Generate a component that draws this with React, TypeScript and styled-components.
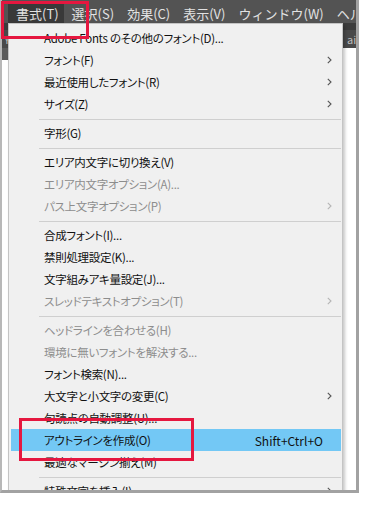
import styled, { createGlobalStyle } from "styled-components";

const GlobalStyle = createGlobalStyle`
  html, body {
    margin: 0;
    padding: 0;
    background: #ffffff;
  }
  body {
    font-family: "Noto Sans CJK JP", "Noto Sans", sans-serif;
  }
`;

const Page = styled.div`
  position: relative;
  width: 370px;
  height: 505px;
  overflow: hidden;
`;

const Frame = styled.div`
  position: relative;
  width: 354px;
  height: 490px;
  border-left: 2px solid #b8b8b8;
  border-right: 3px solid #a2a2a2;
  border-bottom: 3px solid #a2a2a2;
  overflow: hidden;
  display: flex;
  flex-direction: column;
  background: #ffffff;
`;

const MenuBar = styled.div`
  display: flex;
  align-items: flex-end;
  flex-shrink: 0;
  height: 23px;
  padding-left: 6px;
  background: #535353;
`;

const MenuTitle = styled.div<{ $open?: boolean }>`
  display: flex;
  align-items: center;
  height: 20px;
  padding: 0 5px 0 8px;
  font-size: 13px;
  color: #e2e2e2;
  white-space: nowrap;
  background: ${(p) => (p.$open ? "#393939" : "transparent")};
`;

const TabBar = styled.div`
  display: flex;
  align-items: flex-end;
  flex-shrink: 0;
  height: 25px;
  background: #3b3b3b;
`;

const DocTab = styled.div<{ $w: number }>`
  display: flex;
  align-items: center;
  flex-shrink: 0;
  width: ${(p) => p.$w}px;
  height: 18px;
  padding-left: 2px;
  font-size: 11px;
  color: #bdbdbd;
  white-space: nowrap;
  overflow: hidden;
  background: #494949;
`;

const RulerRow = styled.div`
  display: flex;
  flex-shrink: 0;
  height: 12px;
`;

const RulerCorner = styled.div`
  width: 6px;
  background: #5b5b5b;
`;

const Panel = styled.div`
  position: absolute;
  top: 23px;
  left: 6px;
  width: 335px;
  box-sizing: border-box;
  padding: 3px 1px 4px 2px;
  background: #f0f0f0;
  border: 1px solid #c4c4c4;
  box-shadow: 2px 2px 3px rgba(0, 0, 0, 0.22);
`;

const Item = styled.div<{ $disabled?: boolean; $active?: boolean }>`
  display: flex;
  align-items: center;
  height: 22px;
  padding-left: 33px;
  font-size: 11.5px;
  letter-spacing: -0.3px;
  font-feature-settings: "palt";
  white-space: nowrap;
  color: ${(p) => (p.$disabled ? "#8d8d8d" : "#111111")};
  background: ${(p) => (p.$active ? "#73c8f5" : "transparent")};
`;

const Shortcut = styled.span`
  margin-left: auto;
  padding-right: 18px;
  font-size: 12px;
  letter-spacing: 0;
  font-feature-settings: normal;
`;

const Arrow = styled.svg<{ $disabled?: boolean }>`
  margin-left: auto;
  margin-right: 9px;
  width: 5px;
  height: 8px;
  stroke: ${(p) => (p.$disabled ? "#b5b5b5" : "#555555")};
`;

const Separator = styled.div`
  height: 1px;
  margin: 4px 0 2px 28px;
  background: #cfcfcf;
`;

const Callout = styled.div<{ $x: number; $y: number; $w: number; $h: number }>`
  position: absolute;
  left: ${(p) => p.$x}px;
  top: ${(p) => p.$y}px;
  width: ${(p) => p.$w}px;
  height: ${(p) => p.$h}px;
  box-sizing: border-box;
  border: 3px solid #e5173f;
  pointer-events: none;
`;

type Entry =
  | { sep: true }
  | {
      sep?: false;
      label: string;
      disabled?: boolean;
      sub?: boolean;
      active?: boolean;
      shortcut?: string;
    };

const menus = ["書式(T)", "選択(S)", "効果(C)", "表示(V)", "ウィンドウ(W)", "ヘルプ(H)"];

const entries: Entry[] = [
  { label: "Adobe Fonts のその他のフォント(D)..." },
  { label: "フォント(F)", sub: true },
  { label: "最近使用したフォント(R)", sub: true },
  { label: "サイズ(Z)", sub: true },
  { sep: true },
  { label: "字形(G)" },
  { sep: true },
  { label: "エリア内文字に切り換え(V)" },
  { label: "エリア内文字オプション(A)...", disabled: true },
  { label: "パス上文字オプション(P)", disabled: true, sub: true },
  { sep: true },
  { label: "合成フォント(I)..." },
  { label: "禁則処理設定(K)..." },
  { label: "文字組みアキ量設定(J)..." },
  { label: "スレッドテキストオプション(T)", disabled: true, sub: true },
  { sep: true },
  { label: "ヘッドラインを合わせる(H)", disabled: true },
  { label: "環境に無いフォントを解決する...", disabled: true },
  { label: "フォント検索(N)..." },
  { label: "大文字と小文字の変更(C)", sub: true },
  { label: "句読点の自動調整(U)..." },
  { label: "アウトラインを作成(O)", active: true, shortcut: "Shift+Ctrl+O" },
  { label: "最適なマージン揃え(M)" },
  { sep: true },
  { label: "特殊文字を挿入(I)", sub: true },
  { label: "空白文字を挿入(W)", sub: true },
];

const SubArrow = ({ disabled }: { disabled?: boolean }) => (
  <Arrow $disabled={disabled} viewBox="0 0 5 8" fill="none" strokeWidth={1.1}>
    <path d="M0.8 0.8 L4 4 L0.8 7.2" />
  </Arrow>
);

export default function App() {
  return (
    <Page>
      <GlobalStyle />
      <Frame>
        <MenuBar>
          {menus.map((m, i) => (
            <MenuTitle key={m} $open={i === 0}>
              {m}
            </MenuTitle>
          ))}
        </MenuBar>
        <TabBar>
          <DocTab $w={341}>Y</DocTab>
          <DocTab $w={40}>ai @ 100% (RGB/プレビュー)</DocTab>
        </TabBar>
        <RulerRow>
          <RulerCorner />
        </RulerRow>

        <Panel>
          {entries.map((e, i) =>
            e.sep ? (
              <Separator key={i} />
            ) : (
              <Item key={i} $disabled={e.disabled} $active={e.active}>
                {e.label}
                {e.shortcut && <Shortcut>{e.shortcut}</Shortcut>}
                {e.sub && <SubArrow disabled={e.disabled} />}
              </Item>
            )
          )}
        </Panel>
      </Frame>
      <Callout $x={1} $y={1} $w={88} $h={38} />
      <Callout $x={19} $y={418} $w={175} $h={43} />
    </Page>
  );
}
